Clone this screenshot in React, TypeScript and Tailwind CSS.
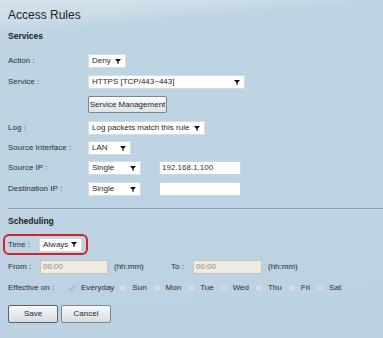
import React from 'react';

const Arrow: React.FC = () => (
  <svg width="6" height="5" viewBox="0 0 6 5" className="shrink-0">
    <path d="M0 0H6L3 3.5Z" fill="#111" />
    <rect x="2.5" y="3" width="1" height="2" fill="#111" />
  </svg>
);

const Select: React.FC<{ value: string; width: string }> = ({ value, width }) => (
  <div
    className={`${width} h-[14px] flex items-center justify-between bg-white border border-[#d4dde3] pl-[3px] pr-[4px] text-[#1f1f1f] whitespace-nowrap overflow-hidden`}
  >
    <span className="leading-none">{value}</span>
    <Arrow />
  </div>
);

const TextInput: React.FC<{ value?: string; width: string; disabled?: boolean }> = ({ value, width, disabled }) => (
  <div
    className={`${width} h-[14px] flex items-center pl-[2px] border ${
      disabled
        ? 'bg-[#efece3] border-[#c9c4b4] text-[#8a8a8a]'
        : 'bg-white border-[#cbd4da] text-[#333]'
    }`}
  >
    <span className="leading-none">{value}</span>
  </div>
);

const Row: React.FC<{ label: string; className?: string; children: React.ReactNode }> = ({ label, className, children }) => (
  <div className={`flex items-center h-[14px] ${className ?? ''}`}>
    <div className="w-[80px] shrink-0 text-[#2e2e2e]">{label}</div>
    {children}
  </div>
);

const Check: React.FC<{ checked?: boolean }> = ({ checked }) =>
  checked ? (
    <svg width="8" height="8" viewBox="0 0 8 8" className="shrink-0">
      <path d="M1 4.5L3 6.5L7 1" stroke="#a9b4bb" strokeWidth="1.4" fill="none" />
    </svg>
  ) : (
    <div className="w-[8px] h-[8px] shrink-0 bg-[#d2dbe1] border border-[#c6cfd5]" />
  );

const days = ['Sun', 'Mon', 'Tue', 'Wed', 'Thu', 'Fri', 'Sat'];

export default function App() {
  return (
    <div
      className="w-[383px] h-[338px] overflow-hidden pl-[8px] flex flex-col text-[8px] leading-[10px] bg-[linear-gradient(175deg,#d2e1eb_0%,#cddde8_6%,#bfd4e3_9%,#bcd2e2_100%)]"
      style={{ fontFamily: '"Liberation Sans", Arial, sans-serif' }}
    >
      <h1 className="mt-[8px] h-[14px] text-[12px] leading-[14px] text-[#222]">Access Rules</h1>
      <div className="mt-[9px] h-[10px] text-[8.5px] font-bold text-[#222]">Services</div>

      <Row label="Action :" className="mt-[13px]">
        <Select value="Deny" width="w-[38px]" />
      </Row>
      <Row label="Service :" className="mt-[7px]">
        <Select value="HTTPS [TCP/443~443]" width="w-[157px]" />
      </Row>
      <div className="mt-[7px] h-[17px] flex">
        <div className="w-[80px] shrink-0" />
        <button className="w-[79px] h-[17px] border border-[#7b858b] rounded-[2px] bg-[linear-gradient(#fbfcfc,#dde3e6)] text-[8px] text-[#1f1f1f] leading-none whitespace-nowrap px-0">
          Service Management
        </button>
      </div>
      <Row label="Log :" className="mt-[8px]">
        <Select value="Log packets match this rule" width="w-[117px]" />
      </Row>
      <Row label="Source Interface :" className="mt-[6px]">
        <Select value="LAN" width="w-[43px]" />
      </Row>
      <Row label="Source IP :" className="mt-[6px]">
        <Select value="Single" width="w-[53px]" />
        <div className="ml-[18px]">
          <TextInput value="192.168.1.100" width="w-[82px]" />
        </div>
      </Row>
      <Row label="Destination IP :" className="mt-[7px]">
        <Select value="Single" width="w-[53px]" />
        <div className="ml-[18px]">
          <TextInput width="w-[82px]" />
        </div>
      </Row>

      <div className="mt-[12px] h-[1px] bg-[#8d9ca6] border-b border-[#d0dde6] box-content" />

      <div className="mt-[6px] h-[10px] text-[8.5px] font-bold text-[#222]">Scheduling</div>

      <div className="mt-[8px] -ml-[5px] w-[85px] h-[21px] border-2 border-[#d2222d] rounded-[6px] flex items-center pl-[3px] pr-[4px]">
        <div className="w-[31px] shrink-0 text-[#2e2e2e]">Time :</div>
        <Select value="Always" width="w-[43px]" />
      </div>

      <div className="mt-[5px] h-[14px] flex items-center text-[#2e2e2e]">
        <div className="w-[32px] shrink-0">From :</div>
        <TextInput value="00:00" width="w-[68px]" disabled />
        <div className="ml-[6px] w-[57px] shrink-0">(hh:mm)</div>
        <div className="w-[22px] shrink-0">To :</div>
        <TextInput value="00:00" width="w-[69px]" disabled />
        <div className="ml-[6px]">(hh:mm)</div>
      </div>

      <div className="mt-[8px] h-[12px] flex items-center text-[#2e2e2e]">
        <div className="w-[60px] shrink-0">Effective on :</div>
        <Check checked />
        <span className="ml-[5px] mr-[5px]">Everyday</span>
        {days.map((d) => (
          <div key={d} className="flex items-center mr-[6px]">
            <Check />
            <span className="ml-[5px]">{d}</span>
          </div>
        ))}
      </div>

      <div className="mt-[11px] flex gap-[3px]">
        <button className="w-[50px] h-[18px] border border-[#56636a] rounded-[2px] bg-[linear-gradient(#f7f9fa,#d6dde0)] text-[8px] text-[#1f1f1f] leading-none">
          Save
        </button>
        <button className="w-[50px] h-[18px] border border-[#7e898f] rounded-[2px] bg-[linear-gradient(#f7f9fa,#d6dde0)] text-[8px] text-[#1f1f1f] leading-none">
          Cancel
        </button>
      </div>
    </div>
  );
}
